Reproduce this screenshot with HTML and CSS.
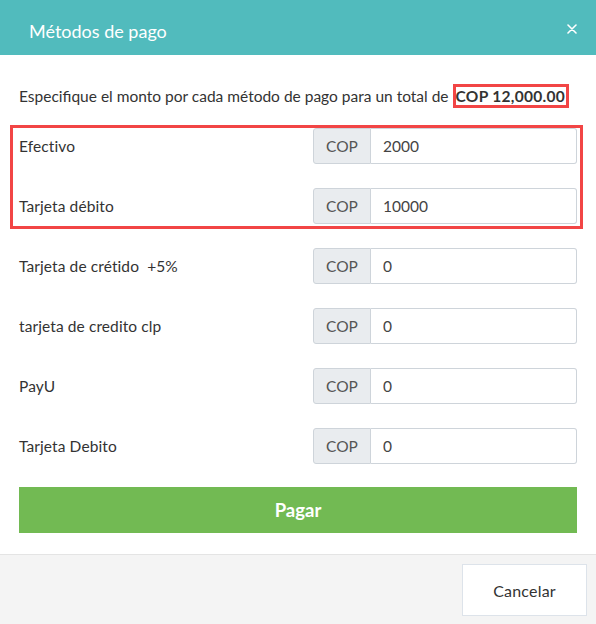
FILE: index.html
```html
<!DOCTYPE html>
<html lang="es">
<head>
    <meta charset="UTF-8">
    <meta name="viewport" content="width=device-width, initial-scale=1.0">
    <title>Métodos de pago</title>
    <link rel="stylesheet" href="styles.css">
</head>
<body>
    <div class="modal">
        <div class="modal-header">
            <h2>Métodos de pago</h2>
            <button class="close" type="button" aria-label="Cerrar">
                <svg width="10" height="10" viewBox="0 0 10 10">
                    <path d="M1 1 L9 9 M9 1 L1 9" stroke="#fff" stroke-width="1.6" stroke-linecap="round"/>
                </svg>
            </button>
        </div>

        <div class="modal-body">
            <p class="intro">Especifique el monto por cada método de pago para un total de <span class="total">COP 12,000.00</span></p>

            <div class="rows">
                <div class="highlight">
                    <div class="row">
                        <label>Efectivo</label>
                        <div class="input-group">
                            <span class="addon">COP</span>
                            <input type="text" value="2000">
                        </div>
                    </div>
                    <div class="row">
                        <label>Tarjeta débito</label>
                        <div class="input-group">
                            <span class="addon">COP</span>
                            <input type="text" value="10000">
                        </div>
                    </div>
                </div>
                <div class="row">
                    <label>Tarjeta de crétido &nbsp;+5%</label>
                    <div class="input-group">
                        <span class="addon">COP</span>
                        <input type="text" value="0">
                    </div>
                </div>
                <div class="row">
                    <label>tarjeta de credito clp</label>
                    <div class="input-group">
                        <span class="addon">COP</span>
                        <input type="text" value="0">
                    </div>
                </div>
                <div class="row">
                    <label>PayU</label>
                    <div class="input-group">
                        <span class="addon">COP</span>
                        <input type="text" value="0">
                    </div>
                </div>
                <div class="row">
                    <label>Tarjeta Debito</label>
                    <div class="input-group">
                        <span class="addon">COP</span>
                        <input type="text" value="0">
                    </div>
                </div>
            </div>

            <button class="pay" type="button">Pagar</button>
        </div>

        <div class="modal-footer">
            <button class="cancel" type="button">Cancelar</button>
        </div>
    </div>
</body>
</html>
```

FILE: styles.css
```css
body {
    font-family: Lato, "Open Sans", sans-serif;
    margin: 0;
    background-color: #fff;
    color: #333;
}
.modal {
    width: 596px;
    min-height: 624px;
    display: flex;
    flex-direction: column;
}
.modal-header {
    height: 55px;
    box-sizing: border-box;
    background: #51bbbd;
    display: flex;
    align-items: flex-start;
    padding: 20px 19px 0 29px;
}
.modal-header h2 {
    margin: 0;
    font-size: 18px;
    line-height: 22px;
    font-weight: 400;
    color: #fff;
}
.close {
    margin-left: auto;
    margin-top: 4px;
    background: none;
    border: none;
    padding: 0;
    width: 10px;
    height: 10px;
    display: flex;
    cursor: pointer;
}
.modal-body {
    padding: 29px 19px 21px 19px;
}
.intro {
    margin: 0 0 20px 0;
    font-size: 15.5px;
    line-height: 24px;
}
.total {
    font-weight: 700;
    letter-spacing: 0.3px;
    border: 3px solid #f24545;
    padding: 0 1px 0 0;
}
.rows {
    display: flex;
    flex-direction: column;
    gap: 24px;
}
.highlight {
    display: flex;
    flex-direction: column;
    gap: 24px;
    border: 3px solid #f24545;
    margin: -3px -6px -5px -9px;
    padding: 0 3px 2px 6px;
}
.row {
    display: flex;
    align-items: center;
    height: 36px;
}
.row label {
    flex: 1;
    font-size: 15.5px;
    letter-spacing: 0.1px;
}
.input-group {
    display: flex;
    width: 264px;
    height: 36px;
}
.addon {
    width: 58px;
    box-sizing: border-box;
    background: #e9ecef;
    border: 1px solid #ced4da;
    border-radius: 3px 0 0 3px;
    color: #555;
    font-size: 15.5px;
    display: flex;
    align-items: center;
    justify-content: center;
}
.input-group input {
    flex: 1;
    min-width: 0;
    box-sizing: border-box;
    border: 1px solid #ced4da;
    border-left: none;
    border-radius: 0 3px 3px 0;
    padding: 0 12px;
    font-family: inherit;
    font-size: 15.5px;
    color: #444;
    outline: none;
}
.pay {
    display: block;
    width: 100%;
    height: 46px;
    margin-top: 23px;
    background: #72ba53;
    border: none;
    color: #fff;
    font-family: inherit;
    font-size: 18.5px;
    font-weight: 700;
    cursor: pointer;
}
.modal-footer {
    flex: 1;
    background: #f4f4f4;
    border-top: 1px solid #e4e4e4;
    display: flex;
    justify-content: flex-end;
    align-items: flex-start;
    padding: 9px 9px 0 0;
}
.cancel {
    width: 125px;
    height: 52px;
    background: #fff;
    border: 1px solid #dde3ea;
    font-family: inherit;
    font-size: 16px;
    letter-spacing: 0.2px;
    color: #333;
    cursor: pointer;
}
```
